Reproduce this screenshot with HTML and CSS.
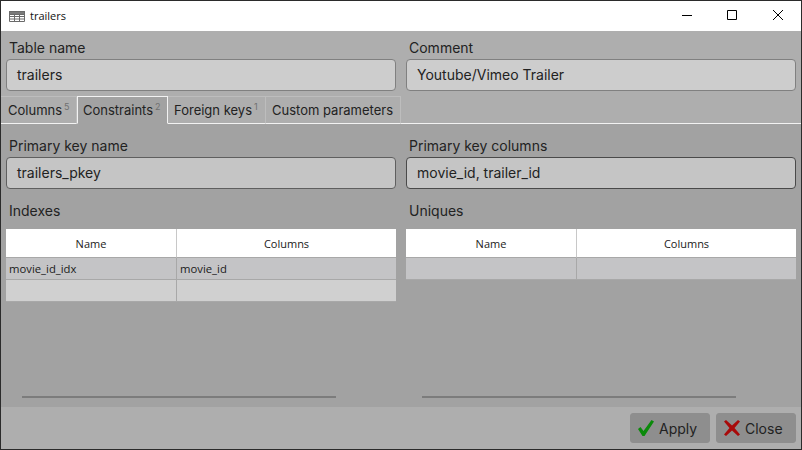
FILE: index.html
```html
<!DOCTYPE html>
<html lang="en">
<head>
<meta charset="utf-8">
<title>trailers</title>
<link rel="stylesheet" href="styles.css">
</head>
<body>
<div class="window">
  <header class="titlebar">
    <svg class="app-icon" width="16" height="11" viewBox="0 0 16 11"><path fill="#7a7a7a" d="M0 0h16v3H0z"/><path fill="none" stroke="#6a6a6a" d="M.5.5h15v10H.5zM.5 3.500h15M.5 5.500h15M.5 8h15M5.500 3v7.500M10.500 3v7.500"/></svg>
    <span class="title">trailers</span>
    <div class="controls">
      <svg class="ctl" width="46" height="30" viewBox="0 0 46 30"><path stroke="#000" fill="none" d="M19 14.500h10"/></svg>
      <svg class="ctl" width="46" height="30" viewBox="0 0 46 30"><path stroke="#000" fill="none" d="M18.500 9.500h9v9h-9z"/></svg>
      <svg class="ctl" width="46" height="30" viewBox="0 0 46 30"><path stroke="#000" fill="none" d="M18 9l10 10M28 9L18 19"/></svg>
    </div>
  </header>

  <section class="head">
    <div class="fields">
      <div class="field"><label class="label">Table name</label><div class="input">trailers</div></div>
      <div class="field"><label class="label">Comment</label><div class="input">Youtube/Vimeo Trailer</div></div>
    </div>
    <nav class="tabs">
      <div class="tab tab-first">Columns<sup class="count">5</sup></div>
      <div class="tab tab-active">Constraints<sup class="count">2</sup></div>
      <div class="tab tab-fk">Foreign keys<sup class="count">1</sup></div>
      <div class="tab tab-last">Custom parameters</div>
    </nav>
  </section>

  <main class="body">
    <div class="fields">
      <div class="field"><label class="label">Primary key name</label><div class="input input-dim">trailers_pkey</div></div>
      <div class="field"><label class="label">Primary key columns</label><div class="input input-dim input-focus">movie_id, trailer_id</div></div>
    </div>
    <div class="panels">
      <div class="panel">
        <div class="label panel-label">Indexes</div>
        <table class="grid">
          <thead><tr><th>Name</th><th>Columns</th></tr></thead>
          <tbody>
            <tr class="row-sel"><td>movie_id_idx</td><td>movie_id</td></tr>
            <tr class="row-new"><td></td><td></td></tr>
          </tbody>
        </table>
        <div class="scroll"></div>
      </div>
      <div class="panel">
        <div class="label panel-label">Uniques</div>
        <table class="grid">
          <thead><tr><th>Name</th><th>Columns</th></tr></thead>
          <tbody>
            <tr class="row-sel"><td></td><td></td></tr>
          </tbody>
        </table>
        <div class="scroll"></div>
      </div>
    </div>
  </main>

  <footer class="footer">
    <button class="btn">
      <svg width="16" height="16" viewBox="0 0 16 16"><path fill="#0a8a0a" d="M0 9l2.500-2 3 4L13.500 0 16 1.500 6.500 16h-2z"/></svg>
      <span>Apply</span>
    </button>
    <button class="btn">
      <svg width="16" height="16" viewBox="0 0 16 16"><path fill="#a80a0a" d="M0 1.500L2 0l6 5.500L14 0l2 1.500L10.500 8l5.500 6.500-2 1.500-6-5.500L2 16l-2-1.500L5.500 8z"/></svg>
      <span>Close</span>
    </button>
  </footer>
</div>
</body>
</html>
```
FILE: styles.css
```css
* { box-sizing: border-box; }
html, body { margin: 0; padding: 0; }
body { width: 802px; height: 450px; overflow: hidden; font-family: "Inter", "Liberation Sans", sans-serif; color: #222; }

.window { width: 802px; height: 450px; border: 1px solid #2b2b2b; display: flex; flex-direction: column; background: #a2a2a2; }

.titlebar { height: 30px; flex: none; background: #fff; display: flex; align-items: center; padding-left: 8px; }
.app-icon { flex: none; }
.title { margin-left: 5px; margin-top: -2px; font: 11px "Open Sans", sans-serif; color: #111; }
.controls { margin-left: auto; display: flex; }
.ctl { display: block; }

.head { background: #aeaeae; flex: none; height: 93px; display: flex; flex-direction: column; }
.fields { display: grid; grid-template-columns: 390px 390px; gap: 10px; padding: 0 5px; }
.field { display: flex; flex-direction: column; }
.label { font-size: 14px; line-height: 17px; color: #222; padding-left: 3px; }
.head .label { margin-top: 8px; margin-bottom: 3px; }
.input { height: 32px; border: 1px solid #808080; border-radius: 4px; background: #cdcdcd; font-size: 14px; line-height: 30px; padding-left: 10px; color: #222; }

.tabs { display: flex; margin-top: 5px; height: 28px; border-bottom: 1px solid #f2f2f2; }
.tab { font-size: 13px; line-height: 26px; color: #222; height: 28px; border: 1px solid #bdbdbd; border-bottom: 1px solid #f2f2f2; border-left: none; padding: 0 7px; white-space: nowrap; background: #aeaeae; }
.tab-first { width: 76px; border-top: 1px solid #bdbdbd; padding-left: 7px; }
.tab-active { width: 91px; padding-left: 5px; background: #a2a2a2; border: 1px solid #f2f2f2; border-bottom-color: #a2a2a2; margin-bottom: -1px; }
.tab-fk { width: 98px; padding-left: 6px; }
.tab-last { width: 135px; padding-left: 6px; }
.count { font-size: 9px; color: #707070; line-height: 0; margin-left: 2px; vertical-align: 5px; }

.body { flex: 1; display: flex; flex-direction: column; padding-top: 13px; min-height: 0; }
.body .label { margin-bottom: 3px; }
.input-dim { background: #c5c5c5; border-color: #5f5f5f; }
.input-focus { border-color: #4a4a4a; }
.panels { flex: 1; display: grid; grid-template-columns: 390px 390px; gap: 10px; padding: 0 5px; min-height: 0; margin-top: 13px; }
.panel { display: flex; flex-direction: column; }
.body .panel-label { margin-bottom: 10px; }

.grid { width: 390px; table-layout: fixed; border-collapse: separate; border-spacing: 0; font-family: "Open Sans", sans-serif; font-size: 11px; color: #1a1a1a; }
.grid th:first-child, .grid td:first-child { width: 171px; }
.grid th { height: 29px; padding: 0; background: #fff; font-weight: 400; border-right: 1px solid #c8c8c8; border-bottom: 1px solid #a8a8a8; }
.grid th:last-child { border-right: none; }
.grid td { height: 22px; padding: 0 0 0 3px; font-size: 11.300px; border-right: 1px solid #a8a8a8; border-bottom: 1px solid #a8a8a8; }
.grid td:last-child { border-right: none; }
.row-sel td { background: #c4c4c6; }
.row-new td { background: #d0d0d0; }

.scroll { height: 2px; width: 314px; background: #7c7c7c; margin: auto 0 9px 16px; }

.footer { flex: none; height: 42px; background: #aeaeae; display: flex; justify-content: flex-end; gap: 6px; padding: 6px 5px 0 0; }
.btn { width: 80px; height: 30px; border: 1px solid #8e8e8e; border-radius: 3px; background: #8e8e8e; font: 14px "Inter", sans-serif; color: #222; display: flex; align-items: center; gap: 5px; padding: 0 0 0 7px; }
```
